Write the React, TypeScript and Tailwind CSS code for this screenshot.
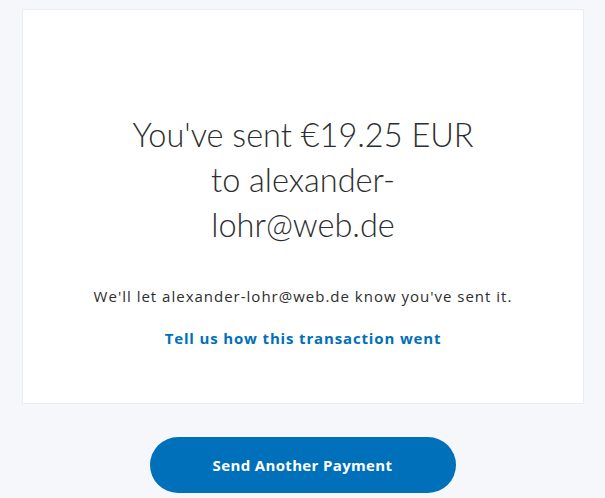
export default function App() {
  return (
    <div className="min-h-[498px] w-[605px] bg-[#f5f7fa] pt-[9px]" style={{ fontFamily: '"Lato", "Noto Sans", sans-serif' }}>
      <div className="ml-[22px] mr-[21px] h-[395px] border border-[#eaeced] bg-white flex flex-col items-center pt-[102px]">
        <h1 className="w-[360px] text-center text-[32.5px] leading-[45px] font-light text-[#2c2e2f]">
          You've sent €19.25 EUR to alexander-lohr@web.de
        </h1>
        <p className="mt-[38px] text-[15px] tracking-[1px] text-[#2c2e2f] font-['Open_Sans',sans-serif]">
          We'll let alexander-lohr@web.de know you've sent it.
        </p>
        <a className="mt-[19px] text-[15px] tracking-[0.85px] font-bold text-[#0070ba] font-['Open_Sans',sans-serif]">
          Tell us how this transaction went
        </a>
      </div>
      <div className="flex justify-center mt-[33px]">
        <button className="w-[306px] h-[56px] rounded-full bg-[#0070ba] text-white text-[15px] tracking-[0.35px] font-bold font-['Open_Sans',sans-serif]">
          Send Another Payment
        </button>
      </div>
    </div>
  );
}
